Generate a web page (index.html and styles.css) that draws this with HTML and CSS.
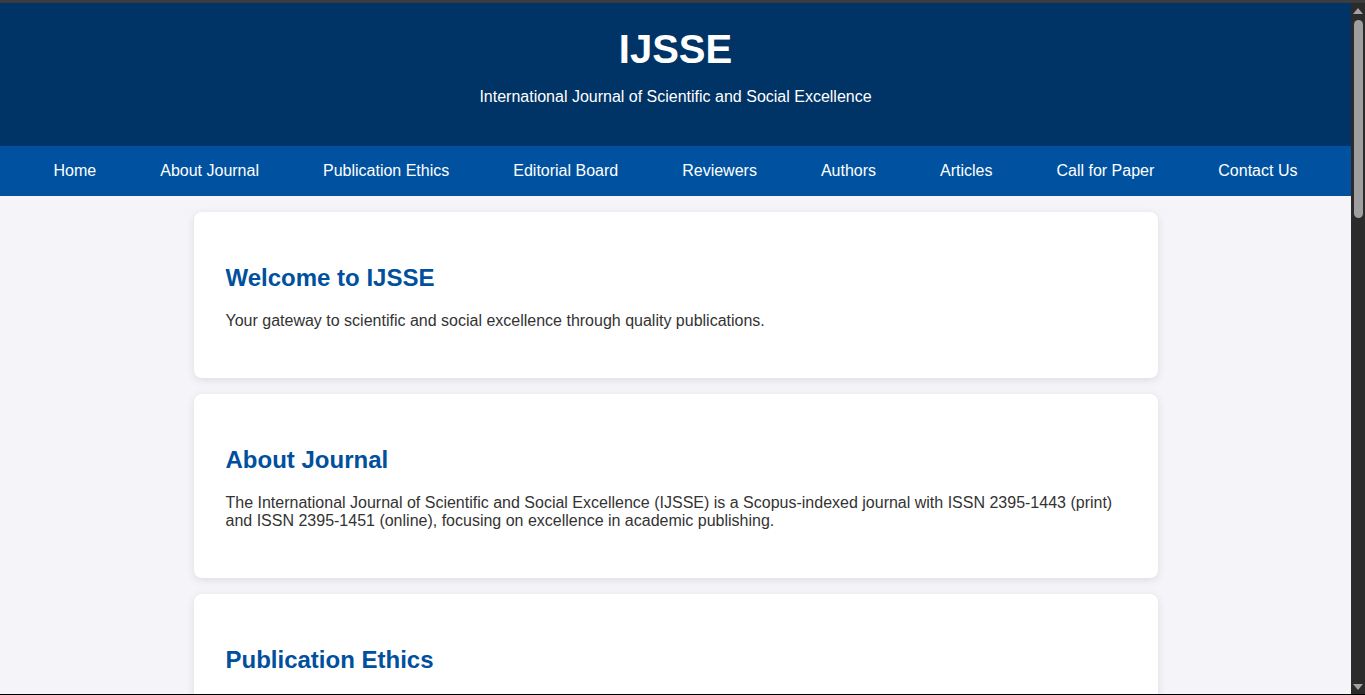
FILE: index.html
```html
<!DOCTYPE html>
<html lang="en">
<head>
<meta charset="utf-8">
<title>IJSSE</title>
<link rel="stylesheet" href="styles.css">
</head>
<body>
<div class="frame-top"></div>
<div class="viewport">
  <div class="page">
    <header class="site-header">
      <h1 class="site-title">IJSSE</h1>
      <p class="site-subtitle">International Journal of Scientific and Social Excellence</p>
    </header>
    <nav class="site-nav">
      <a href="#">Home</a>
      <a href="#">About Journal</a>
      <a href="#">Publication Ethics</a>
      <a href="#">Editorial Board</a>
      <a href="#">Reviewers</a>
      <a href="#">Authors</a>
      <a href="#">Articles</a>
      <a href="#">Call for Paper</a>
      <a href="#">Contact Us</a>
    </nav>
    <main class="content">
      <section class="card">
        <h2>Welcome to IJSSE</h2>
        <p>Your gateway to scientific and social excellence through quality publications.</p>
      </section>
      <section class="card">
        <h2>About Journal</h2>
        <p>The International Journal of Scientific and Social Excellence (IJSSE) is a Scopus-indexed journal with ISSN 2395-1443 (print) and ISSN 2395-1451 (online), focusing on excellence in academic publishing.</p>
      </section>
      <section class="card">
        <h2>Publication Ethics</h2>
        <p>IJSSE is committed to upholding the highest standards of publication ethics and takes all possible measures against publication malpractice.</p>
      </section>
    </main>
  </div>
  <div class="scrollbar">
    <div class="arrow-up"></div>
    <div class="track"><div class="thumb"></div></div>
    <div class="arrow-down"></div>
  </div>
</div>
<div class="frame-bottom"></div>
</body>
</html>
```
FILE: styles.css
```css
html, body {
  margin: 0;
  padding: 0;
  height: 100%;
  overflow: hidden;
}
body {
  display: flex;
  flex-direction: column;
  font-family: "Liberation Sans", Arial, sans-serif;
  color: #333;
  background: #f4f4f9;
}
.frame-top {
  height: 3px;
  background: #3c3c3c;
  flex: none;
}
.frame-bottom {
  height: 1px;
  background: #000;
  flex: none;
}
.viewport {
  flex: 1;
  display: flex;
  min-height: 0;
}
.page {
  flex: 1;
  overflow: hidden;
  background: #f4f4f9;
}
.scrollbar {
  width: 14px;
  flex: none;
  background: #2b2b2b;
  display: flex;
  flex-direction: column;
  align-items: center;
}
.arrow-up {
  margin-top: 5px;
  width: 0;
  height: 0;
  border-left: 5px solid transparent;
  border-right: 5px solid transparent;
  border-bottom: 6px solid #a3a3a3;
}
.track {
  flex: 1;
  width: 100%;
  display: flex;
  justify-content: center;
  padding-top: 6px;
}
.thumb {
  width: 9px;
  height: 198px;
  border-radius: 5px;
  background: #9f9f9f;
}
.arrow-down {
  margin-bottom: 4px;
  width: 0;
  height: 0;
  border-left: 5px solid transparent;
  border-right: 5px solid transparent;
  border-top: 6px solid #a3a3a3;
}
.site-header {
  background: #003366;
  color: #fff;
  text-align: center;
  padding: 23px 20px 40px;
}
.site-title {
  margin: 0;
  font-size: 40px;
  font-weight: bold;
  line-height: 46px;
}
.site-subtitle {
  margin: 16px 0 0;
  font-size: 16px;
  line-height: 18px;
}
.site-nav {
  background: #0052a0;
  height: 50px;
  display: flex;
  justify-content: center;
  align-items: center;
}
.site-nav a {
  color: #fff;
  text-decoration: none;
  font-size: 16px;
  padding: 0 32px;
}
.content {
  max-width: 964px;
  margin: 16px auto 0;
  display: flex;
  flex-direction: column;
  gap: 16px;
}
.card {
  background: #fff;
  border-radius: 8px;
  box-shadow: 0 2px 8px rgba(0, 0, 0, 0.1);
  padding: 32px;
}
.card h2 {
  margin: 20px 0 20px;
  font-size: 24px;
  line-height: 28px;
  color: #00509e;
}
.card p {
  margin: 0 0 16px;
  font-size: 16px;
  line-height: 18px;
}
```
